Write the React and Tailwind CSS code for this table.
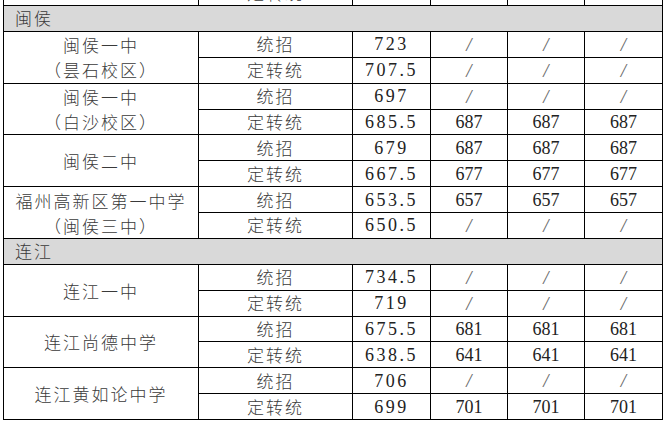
import React from "react";

const sections = [
  {
    name: "闽侯",
    schools: [
      {
        lines: ["闽侯一中", "（昙石校区）"],
        rows: [
          ["统招", "723", "/", "/", "/"],
          ["定转统", "707.5", "/", "/", "/"],
        ],
      },
      {
        lines: ["闽侯一中", "（白沙校区）"],
        rows: [
          ["统招", "697", "/", "/", "/"],
          ["定转统", "685.5", "687", "687", "687"],
        ],
      },
      {
        lines: ["闽侯二中"],
        rows: [
          ["统招", "679", "687", "687", "687"],
          ["定转统", "667.5", "677", "677", "677"],
        ],
      },
      {
        lines: ["福州高新区第一中学", "（闽侯三中）"],
        rows: [
          ["统招", "653.5", "657", "657", "657"],
          ["定转统", "650.5", "/", "/", "/"],
        ],
      },
    ],
  },
  {
    name: "连江",
    schools: [
      {
        lines: ["连江一中"],
        rows: [
          ["统招", "734.5", "/", "/", "/"],
          ["定转统", "719", "/", "/", "/"],
        ],
      },
      {
        lines: ["连江尚德中学"],
        rows: [
          ["统招", "675.5", "681", "681", "681"],
          ["定转统", "638.5", "641", "641", "641"],
        ],
      },
      {
        lines: ["连江黄如论中学"],
        rows: [
          ["统招", "706", "/", "/", "/"],
          ["定转统", "699", "701", "701", "701"],
        ],
      },
    ],
  },
];

const cjk = { fontFamily: '"Noto Sans CJK SC", "Noto Sans", sans-serif' };
const serif = { fontFamily: '"Liberation Serif", "Times New Roman", serif' };

function Score({ value, spaced }) {
  if (value === "/") {
    return (
      <span className="text-[19px] leading-none italic text-[#666]" style={serif}>
        /
      </span>
    );
  }
  return (
    <span
      className={
        spaced
          ? "text-[18px] leading-none tracking-[2.5px] text-[#222]"
          : "text-[18px] leading-none text-[#222]"
      }
      style={serif}
    >
      {value}
    </span>
  );
}

export default function App() {
  const cell = "border border-black p-0 text-center align-middle leading-none";
  const label = "text-[17px] font-light leading-none tracking-[2px] text-[#3a3a3a]";
  return (
    <div className="w-[666px] h-[426px] overflow-hidden bg-white pl-[3px]">
      <table className="table-fixed border-collapse w-[659px] mt-[-21px]">
        <colgroup>
          <col className="w-[195px]" />
          <col className="w-[154px]" />
          <col className="w-[78px]" />
          <col className="w-[77px]" />
          <col className="w-[77px]" />
          <col className="w-[78px]" />
        </colgroup>
        <tbody>
          <tr className="h-[26px]">
            <td className={cell}></td>
            <td className={cell}>
              <span className={label} style={cjk}>
                定转统
              </span>
            </td>
            <td className={cell}></td>
            <td className={cell}>
              <Score value="/" />
            </td>
            <td className={cell}>
              <Score value="/" />
            </td>
            <td className={cell}>
              <Score value="/" />
            </td>
          </tr>
          {sections.map((section) => (
            <React.Fragment key={section.name}>
              <tr className="h-[25.875px] bg-[#d9d9d9]">
                <td colSpan={6} className="border border-black p-0 pl-[11px] text-left align-middle leading-none">
                  <span className={label} style={cjk}>
                    {section.name}
                  </span>
                </td>
              </tr>
              {section.schools.map((school, si) =>
                school.rows.map((row, ri) => (
                  <tr key={si + "-" + ri} className="h-[25.875px]">
                    {ri === 0 && (
                      <td rowSpan={2} className={cell}>
                        <div
                          className="flex flex-col text-[17px] font-light leading-[25px] tracking-[2px] text-[#3a3a3a]"
                          style={cjk}
                        >
                          {school.lines.map((l) => (
                            <span key={l}>{l}</span>
                          ))}
                        </div>
                      </td>
                    )}
                    <td className={cell}>
                      <span className={label} style={cjk}>
                        {row[0]}
                      </span>
                    </td>
                    <td className={cell}>
                      <Score value={row[1]} spaced />
                    </td>
                    {row.slice(2).map((v, i) => (
                      <td key={i} className={cell}>
                        <Score value={v} />
                      </td>
                    ))}
                  </tr>
                ))
              )}
            </React.Fragment>
          ))}
        </tbody>
      </table>
    </div>
  );
}
